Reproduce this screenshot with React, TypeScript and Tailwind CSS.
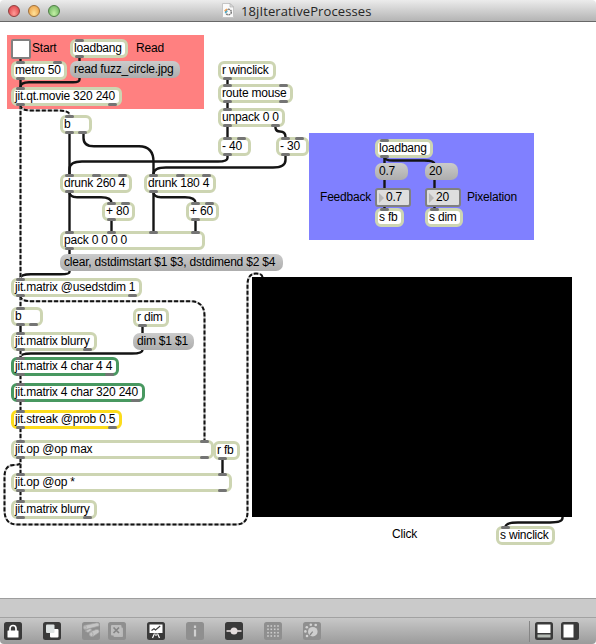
import type { ReactNode } from "react";

type Tone = "plain" | "green" | "yellow";
type Box = {
  text: string;
  x: number;
  y: number;
  w: number;
  ins?: number;
  outs?: number;
  tone?: Tone;
};

const tones: Record<Tone, string> = {
  plain: "border-[#cdd5b2]",
  green: "border-[#489860]",
  yellow: "border-[#fcdc1c]",
};

const objects: Box[] = [
  { text: "loadbang", x: 70, y: 39, w: 58, ins: 1, outs: 1 },
  { text: "metro 50", x: 11, y: 61, w: 56, ins: 2, outs: 1 },
  { text: "jit.qt.movie 320 240", x: 11, y: 87, w: 111, ins: 1, outs: 2 },
  { text: "b", x: 60, y: 115, w: 32, ins: 1, outs: 2 },
  { text: "drunk 260 4", x: 60, y: 174, w: 72, ins: 3, outs: 1 },
  { text: "drunk 180 4", x: 144, y: 174, w: 72, ins: 3, outs: 1 },
  { text: "+ 80", x: 102, y: 202, w: 33, ins: 2, outs: 1 },
  { text: "+ 60", x: 186, y: 202, w: 33, ins: 2, outs: 1 },
  { text: "pack 0 0 0 0", x: 60, y: 231, w: 145, ins: 4, outs: 1 },
  { text: "r winclick", x: 218, y: 61, w: 58, outs: 1 },
  { text: "route mouse", x: 218, y: 84, w: 75, ins: 2, outs: 2 },
  { text: "unpack 0 0", x: 218, y: 108, w: 67, ins: 1, outs: 2 },
  { text: "- 40", x: 218, y: 137, w: 33, ins: 2, outs: 1 },
  { text: "- 30", x: 276, y: 137, w: 33, ins: 2, outs: 1 },
  { text: "loadbang", x: 375, y: 139, w: 58, ins: 1, outs: 1 },
  { text: "s fb", x: 375, y: 208, w: 29, ins: 1 },
  { text: "s dim", x: 425, y: 208, w: 38, ins: 1 },
  { text: "jit.matrix @usedstdim 1", x: 11, y: 278, w: 131, ins: 1, outs: 2 },
  { text: "b", x: 11, y: 307, w: 32, ins: 1, outs: 2 },
  { text: "r dim", x: 133, y: 308, w: 36, outs: 1 },
  { text: "jit.matrix blurry", x: 11, y: 332, w: 86, ins: 1, outs: 2 },
  { text: "jit.matrix 4 char 4 4", x: 11, y: 357, w: 108, ins: 1, outs: 2, tone: "green" },
  { text: "jit.matrix 4 char 320 240", x: 11, y: 383, w: 134, ins: 1, outs: 2, tone: "green" },
  { text: "jit.streak @prob 0.5", x: 11, y: 410, w: 111, ins: 1, outs: 2, tone: "yellow" },
  { text: "jit.op @op max", x: 11, y: 440, w: 203, ins: 2, outs: 2 },
  { text: "r fb", x: 213, y: 441, w: 27, outs: 1 },
  { text: "jit.op @op *", x: 11, y: 473, w: 221, ins: 2, outs: 2 },
  { text: "jit.matrix blurry", x: 11, y: 500, w: 86, ins: 1, outs: 2 },
  { text: "s winclick", x: 496, y: 526, w: 59, ins: 1 },
];

const messages: Box[] = [
  { text: "read fuzz_circle.jpg", x: 70, y: 61, w: 110 },
  { text: "clear, dstdimstart $1 $3, dstdimend $2 $4", x: 60, y: 254, w: 223 },
  { text: "0.7", x: 375, y: 163, w: 33 },
  { text: "20", x: 425, y: 163, w: 33 },
  { text: "dim $1 $1", x: 133, y: 333, w: 61 },
];

const numbers: Box[] = [
  { text: "0.7", x: 375, y: 188, w: 36 },
  { text: "20", x: 425, y: 188, w: 36 },
];

const labels: Box[] = [
  { text: "Start", x: 32, y: 39, w: 30 },
  { text: "Read", x: 136, y: 39, w: 30 },
  { text: "Feedback", x: 320, y: 188, w: 54 },
  { text: "Pixelation", x: 467, y: 188, w: 54 },
  { text: "Click", x: 392, y: 525, w: 30 },
];

const cords = [
  "M20.5 58V62",
  "M20.5 79V88",
  "M79.5 57V62",
  "M79.5 77V79.5Q79.5 82.2 73 82.2H29Q20.5 82.2 20.5 87",
  "M69.5 133V175",
  "M83.5 133V138Q83.5 146.3 94 146.3H139Q153.5 146.3 153.5 162V175",
  "M227.5 79V85",
  "M227.5 102V109",
  "M227.5 126V138",
  "M275.5 126V128Q276 131.5 280 131.5Q285.5 131.5 285.5 137",
  "M227.5 155V158Q227.5 161.5 218 161.5H82Q69.5 161.5 69.5 169V175",
  "M285.5 155V160Q285.5 167.5 273 167.5H166Q153.5 167.5 153.5 174",
  "M69.5 192V232",
  "M69.5 192Q69.5 197.2 77 197.2H101Q111.5 197.2 111.5 203",
  "M153.5 192V232",
  "M153.5 192Q153.5 197.2 161 197.2H185Q195.5 197.2 195.5 203",
  "M111.5 220V232",
  "M195.5 220V232",
  "M69.5 249V255",
  "M69.5 270V272Q69.5 274.2 61 274.2H31Q20.5 274.2 20.5 278",
  "M384.5 157V164",
  "M384.5 157Q384.5 160.5 393 160.5H424Q434.5 160.5 434.5 164",
  "M384.5 179V189",
  "M434.5 179V189",
  "M384.5 206V210",
  "M434.5 206V210",
  "M20.5 325V333",
  "M142.5 326V334",
  "M142.5 349V350Q142.5 353.5 132 353.5H31Q20.5 353.5 20.5 357",
  "M222.5 459V474",
  "M562.5 516V518Q562.5 522.5 550 522.5H518Q505.5 522.5 505.5 527",
];

const matrixCords = [
  "M20.5 105V279",
  "M20.5 105Q20.5 110.5 31 110.5H58Q69.5 110.5 69.5 115",
  "M20.5 296V308",
  "M20.5 296Q20.5 301.2 31 301.2H190Q204.5 301.2 204.5 316V441",
  "M20.5 350V358",
  "M20.5 375V384",
  "M20.5 401V411",
  "M20.5 428V441",
  "M20.5 458V474",
  "M20.5 491V501",
  "M262.5 277Q262 273.5 256 273.5Q247.5 273.5 247.5 285V512Q247.5 524.5 236 524.5H17Q4.5 524.5 4.5 510V477Q4.5 465 14 465Q20.5 465 20.5 462",
];

function Ports({ count, side }: { count: number; side: "top" | "bottom" }) {
  return (
    <div
      className={`absolute inset-x-[2px] flex justify-between ${
        side === "top" ? "-top-[3px]" : "-bottom-[3px]"
      }`}
    >
      {Array.from({ length: count }, (_, i) => (
        <span key={i} className="h-[3px] w-[9px] rounded-[1.5px] bg-[#747474]" />
      ))}
    </div>
  );
}

function PatchObject({ text, x, y, w, ins = 0, outs = 0, tone = "plain" }: Box) {
  return (
    <div
      className={`absolute h-[19px] rounded-[6px] border-[3px] bg-white ${tones[tone]}`}
      style={{ left: x, top: y, width: w }}
    >
      <Ports count={ins} side="top" />
      <Ports count={outs} side="bottom" />
      <span className="relative block pl-px leading-[13px] whitespace-pre">{text}</span>
    </div>
  );
}

function Tile({ faded, children }: { faded?: boolean; children?: ReactNode }) {
  return (
    <svg
      width="18"
      height="18"
      viewBox="0 0 18 18"
      className={faded ? "shrink-0 text-[#8f8f8f]" : "shrink-0 text-[#3a3a3a]"}
    >
      <rect width="18" height="18" rx="2.5" fill="currentColor" />
      {children}
    </svg>
  );
}

function TitleBar() {
  return (
    <header className="relative flex h-[22px] items-center rounded-t-[4px] border-b border-[#686868] bg-linear-to-b from-[#ececec] to-[#b4b4b4] pl-2">
      <div className="flex gap-2">
        <i className="size-3 rounded-full border border-[#8f3f3d] bg-radial-[at_50%_75%] from-[#ff9c97] to-[#d9343c]" />
        <i className="size-3 rounded-full border border-[#a0703a] bg-radial-[at_50%_75%] from-[#ffe29a] to-[#e9963a]" />
        <i className="size-3 rounded-full border border-[#4f7e45] bg-radial-[at_50%_75%] from-[#c4f0a5] to-[#62ad58]" />
      </div>
      <svg width="12" height="15" viewBox="0 0 12 15" className="ml-[162px] shrink-0">
        <path d="M.5 .5H8L11.5 4V14.5H.5Z" fill="#fafafa" stroke="#c5c5c5" />
        <path d="M8 .5V4H11.5Z" fill="#ddd" stroke="#aaa" strokeWidth=".6" />
        <circle cx="6.5" cy="9" r="2.8" fill="none" stroke="#777" strokeWidth="1.5" strokeDasharray="1.8 .7" />
        <path d="M2.5 8L5 6" stroke="#f0a050" strokeWidth="1.4" />
        <path d="M3 10L5.5 8" stroke="#4eb2cf" strokeWidth="1.2" />
      </svg>
      <h1 className="ml-[7px] font-['Open_Sans','Noto_Sans',sans-serif] text-[13px] leading-5 tracking-[0.1px] text-[#262626]">
        18jIterativeProcesses
      </h1>
    </header>
  );
}

function Toolbar() {
  return (
    <footer className="flex h-[27px] items-center rounded-b-[4px] border-t border-[#a2a2a2] bg-linear-to-b from-[#c8c8c8] to-[#9b9b9b] pr-[17px] pl-1">
      <Tile>
        <path d="M6 9V6.5a3 3 0 0 1 6 0V9" fill="none" stroke="#fff" strokeWidth="1.7" />
        <rect x="3.5" y="8.5" width="11" height="7" rx=".5" fill="#fff" />
      </Tile>
      <div className="ml-[21px] flex">
        <Tile>
          <rect x="7" y="7" width="8.5" height="8.5" rx="1" fill="#fff" />
          <rect x="3" y="2.5" width="8.5" height="8.5" rx="1" fill="#dfe4e4" />
        </Tile>
      </div>
      <div className="ml-[21px] flex gap-2">
        <Tile faded>
          <g fill="#c5c5c5" stroke="#a0a0a0" strokeWidth=".7">
            <path d="M2 3.5L15 .8Q18 1 17 4L4 7.5Q0 7 2 3.5Z" />
            <path d="M8 10L14 7.5Q18 7 17 10.5L11 14.5Q6 14 8 10Z" />
            <path d="M3 9L8 6.5L10 8L6 10.5Z" />
            <ellipse cx="3" cy="5.5" rx="1.2" ry="2" />
            <ellipse cx="9.3" cy="12.3" rx="1.7" ry="2.2" />
          </g>
        </Tile>
        <Tile faded>
          <rect x="5.5" y="5.5" width="9.5" height="9.5" rx="1" fill="#b8b8b8" />
          <rect x="3" y="3" width="10.5" height="10.5" rx="1" fill="#bdbdbd" />
          <path d="M5.5 5.5L11 11M11 5.5L5.5 11" stroke="#858585" strokeWidth="1.7" />
        </Tile>
      </div>
      <div className="ml-[21px] flex gap-[21px]">
        <Tile>
          <path d="M2.5 2.5H15.5V11H2.5Z" fill="#fff" />
          <path d="M4.5 8.5L7 6.8L8.5 8L13.2 4" fill="none" stroke="#3a3a3a" strokeWidth="1.1" />
          <path d="M7.5 11.5L5.5 16M9 11.5V14M10.5 11.5L12.5 16" stroke="#fff" strokeWidth="1.2" />
        </Tile>
        <Tile faded>
          <path d="M9 3.5V6M9 7.5V14.5" stroke="#d0d0d0" strokeWidth="2.2" />
        </Tile>
        <Tile>
          <path d="M1.5 9H16.5" stroke="#e8e0e0" strokeWidth="1.6" />
          <circle cx="9" cy="9" r="3.5" fill="#e4dddd" />
        </Tile>
        <Tile faded>
          {[4, 7.3, 10.7, 14].map((cy) =>
            [4, 7.3, 10.7, 14].map((cx) => (
              <rect key={`${cx}-${cy}`} x={cx - 0.8} y={cy - 0.8} width="1.6" height="1.6" fill="#cdcdcd" />
            )),
          )}
        </Tile>
        <Tile faded>
          <circle cx="9.8" cy="9.7" r="4.8" fill="#cecece" />
          <path d="M7 13L9.7 9.7" stroke="#858585" strokeWidth="1.2" />
          <g fill="#d4d4d4">
            <circle cx="4" cy="14" r="1.3" />
            <circle cx="2.4" cy="9.4" r="1.3" />
            <circle cx="3.8" cy="5.2" r="1.3" />
            <circle cx="7.8" cy="2.7" r="1.3" />
            <circle cx="12.7" cy="3" r="1.3" />
          </g>
        </Tile>
      </div>
      <span className="ml-auto h-[21px] w-px bg-[#858585]" />
      <div className="ml-[5px] flex gap-2">
        <Tile>
          <path d="M2.5 2.5H15.5V11H2.5Z" fill="#fff" />
          <path d="M2.5 12.5H15.5V15.5H2.5Z" fill="#b4bab4" />
        </Tile>
        <Tile>
          <path d="M2.5 2.5H12.5V15.5H2.5Z" fill="#fff" />
        </Tile>
      </div>
    </footer>
  );
}

function Patcher() {
  return (
    <main className="relative flex-1 overflow-hidden bg-white">
      {/* Patch coordinates are measured from the window's top edge. */}
      <div className="absolute inset-x-0 -top-[22px] h-[620px]">
        <div className="absolute top-[35px] left-[7px] h-[74px] w-[197px] bg-[#ff8080]" />
        <div className="absolute top-[133px] left-[309px] h-[107px] w-[225px] bg-[#8080ff]" />
        <svg width="596" height="620" className="absolute inset-0" fill="none">
          {cords.map((d) => (
            <path key={d} d={d} stroke="#141414" strokeWidth="2.4" />
          ))}
          {matrixCords.map((d) => (
            <g key={d}>
              <path d={d} stroke="#c4c4c4" strokeWidth="2" />
              <path d={d} stroke="#111" strokeWidth="2" strokeDasharray="4 2" />
            </g>
          ))}
        </svg>
        <div className="absolute top-[277px] left-[252px] h-[240px] w-[320px] bg-black" />
        <div className="absolute top-[39px] left-[11px] size-5 rounded-[2px] border-2 border-[#808080] bg-white" />
        {objects.map((o) => (
          <PatchObject key={`${o.x}-${o.y}`} {...o} />
        ))}
        {messages.map((m) => (
          <div
            key={`${m.x}-${m.y}`}
            className="absolute h-[17px] rounded-[7px] bg-linear-to-b from-[#cbcbcb] to-[#adadad] pl-1 leading-[17px] whitespace-pre"
            style={{ left: m.x, top: m.y, width: m.w }}
          >
            {m.text}
          </div>
        ))}
        {numbers.map((n) => (
          <div
            key={n.x}
            className="absolute flex h-[19px] items-center rounded-[3px] border-2 border-[#808080] bg-[#dedede] pl-[2px]"
            style={{ left: n.x, top: n.y, width: n.w }}
          >
            <svg width="5" height="10" viewBox="0 0 5 10">
              <path d="M0 0L5 5L0 10Z" fill="#b8b8b8" />
            </svg>
            <span className="ml-[2px] leading-[15px]">{n.text}</span>
          </div>
        ))}
        {labels.map((l) => (
          <span
            key={l.text}
            className="absolute leading-[19px] whitespace-pre"
            style={{ left: l.x, top: l.y }}
          >
            {l.text}
          </span>
        ))}
      </div>
    </main>
  );
}

export default function App() {
  return (
    <div className="flex h-[644px] w-[596px] flex-col overflow-hidden bg-white font-['Liberation_Sans',Arial,sans-serif] text-[12px] tracking-[-0.2px] text-black">
      <TitleBar />
      <Patcher />
      <div className="h-[19px] border-t border-[#9e9e9e] bg-[#cacaca]" />
      <Toolbar />
    </div>
  );
}
